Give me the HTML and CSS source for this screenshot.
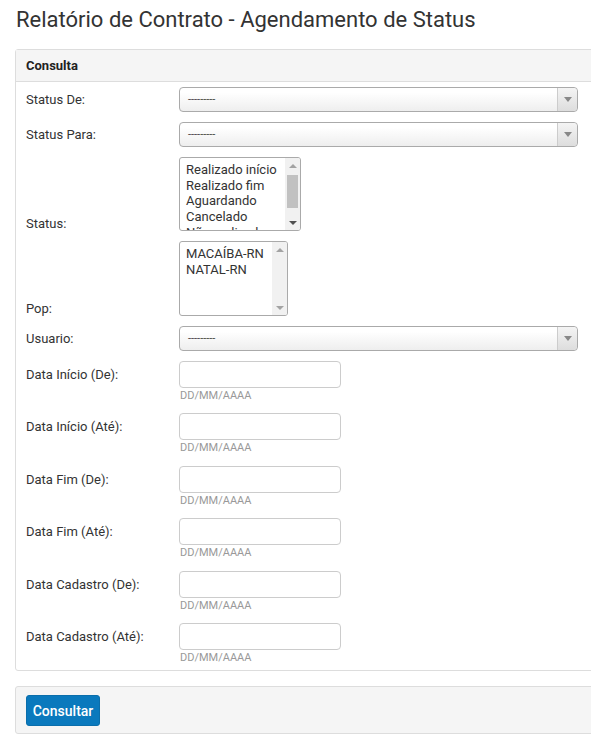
FILE: index.html
```html
<!DOCTYPE html>
<html lang="pt-BR">
<head>
<meta charset="utf-8">
<title>Relatório de Contrato - Agendamento de Status</title>
<link rel="stylesheet" href="styles.css">
</head>
<body>
<div class="page">
  <h1 class="title">Relatório de Contrato - Agendamento de Status</h1>

  <div class="panel">
    <div class="panel-heading">Consulta</div>
    <div class="panel-body">
      <div class="row row-center">
        <label class="lbl">Status De:</label>
        <div class="select"><span class="select-text">---------</span><span class="select-arrow"><i class="tri"></i></span></div>
      </div>
      <div class="row row-center">
        <label class="lbl">Status Para:</label>
        <div class="select"><span class="select-text">---------</span><span class="select-arrow"><i class="tri"></i></span></div>
      </div>
      <div class="row row-end">
        <label class="lbl">Status:</label>
        <div class="listbox lb-status">
          <div class="lb-items">
            <div>Realizado início</div>
            <div>Realizado fim</div>
            <div>Aguardando</div>
            <div>Cancelado</div>
            <div>Não realizado</div>
          </div>
          <div class="sb">
            <span class="sb-btn"><i class="sb-up light"></i></span>
            <span class="sb-track"><span class="sb-thumb"></span></span>
            <span class="sb-btn"><i class="sb-down"></i></span>
          </div>
        </div>
      </div>
      <div class="row row-end">
        <label class="lbl">Pop:</label>
        <div class="listbox lb-pop">
          <div class="lb-items">
            <div>MACAÍBA-RN</div>
            <div>NATAL-RN</div>
          </div>
          <div class="sb">
            <span class="sb-btn"><i class="sb-up light"></i></span>
            <span class="sb-track"></span>
            <span class="sb-btn"><i class="sb-down light"></i></span>
          </div>
        </div>
      </div>
      <div class="row row-center">
        <label class="lbl">Usuario:</label>
        <div class="select"><span class="select-text">---------</span><span class="select-arrow"><i class="tri"></i></span></div>
      </div>
      <div class="row row-start">
        <label class="lbl lbl-input">Data Início (De):</label>
        <div class="field"><input class="input" type="text"><span class="help">DD/MM/AAAA</span></div>
      </div>
      <div class="row row-start">
        <label class="lbl lbl-input">Data Início (Até):</label>
        <div class="field"><input class="input" type="text"><span class="help">DD/MM/AAAA</span></div>
      </div>
      <div class="row row-start">
        <label class="lbl lbl-input">Data Fim (De):</label>
        <div class="field"><input class="input" type="text"><span class="help">DD/MM/AAAA</span></div>
      </div>
      <div class="row row-start">
        <label class="lbl lbl-input">Data Fim (Até):</label>
        <div class="field"><input class="input" type="text"><span class="help">DD/MM/AAAA</span></div>
      </div>
      <div class="row row-start">
        <label class="lbl lbl-input">Data Cadastro (De):</label>
        <div class="field"><input class="input" type="text"><span class="help">DD/MM/AAAA</span></div>
      </div>
      <div class="row row-start">
        <label class="lbl lbl-input">Data Cadastro (Até):</label>
        <div class="field"><input class="input" type="text"><span class="help">DD/MM/AAAA</span></div>
      </div>
    </div>
  </div>

  <div class="panel panel-actions">
    <button class="btn" type="button">Consultar</button>
  </div>
</div>
</body>
</html>
```

FILE: styles.css
```css
html {
  overflow: hidden;
}
body {
  margin: 0;
  font-family: Roboto, "Liberation Sans", Arial, sans-serif;
  color: #333;
  background: #fff;
}
.page {
  padding-left: 15px;
  width: 590px;
}
.title {
  margin: 0;
  padding: 8px 0 0 1px;
  font-size: 22px;
  line-height: 24px;
  font-weight: 400;
  color: #333;
  height: 49px;
  box-sizing: border-box;
  white-space: nowrap;
}
.panel {
  border: 1px solid #ddd;
  border-radius: 3px;
  background: #fff;
}
.panel-heading {
  height: 31px;
  line-height: 31px;
  padding-left: 10px;
  background: #f5f5f5;
  border-bottom: 1px solid #ddd;
  font-size: 13px;
  font-weight: 700;
  color: #222;
}
.panel-body {
  padding: 5px 10px 5px;
  display: flex;
  flex-direction: column;
  gap: 10px;
}
.row {
  display: flex;
}
.row-center { align-items: center; }
.row-end { align-items: flex-end; }
.row-start { align-items: flex-start; }
.lbl {
  width: 153px;
  flex: none;
  font-size: 13px;
  line-height: 16px;
  color: #333;
}
.row-end .lbl {
  line-height: 14px;
}
.lbl-input {
  line-height: 27px;
}
.select {
  width: 399px;
  height: 25px;
  box-sizing: border-box;
  border: 1px solid #aaa;
  border-radius: 4px;
  background: linear-gradient(#fff 20%, #eee 100%);
  display: flex;
  align-items: center;
}
.select-text {
  flex: 1;
  padding-left: 8px;
  font-size: 11px;
  color: #444;
  line-height: 23px;
}
.select-arrow {
  width: 19px;
  height: 23px;
  border-left: 1px solid #ccc;
  border-radius: 0 4px 4px 0;
  background: linear-gradient(#f4f4f4, #ddd);
  display: flex;
  align-items: center;
  justify-content: center;
}
.tri {
  width: 0;
  height: 0;
  border-left: 4px solid transparent;
  border-right: 4px solid transparent;
  border-top: 5px solid #888;
}
.listbox {
  box-sizing: border-box;
  border: 1px solid #aaa;
  border-radius: 3px;
  background: #fff;
  display: flex;
  overflow: hidden;
}
.lb-status {
  width: 122px;
  height: 74px;
}
.lb-pop {
  width: 109px;
  height: 75px;
}
.lb-items {
  flex: 1;
  padding: 4px 0 0 6px;
  font-size: 13px;
  line-height: 15.7px;
  color: #333;
  white-space: nowrap;
  overflow: hidden;
}
.lb-pop .lb-items {
  line-height: 16px;
}
.sb {
  width: 15px;
  flex: none;
  background: #f1f1f1;
  display: flex;
  flex-direction: column;
}
.sb-btn {
  height: 15px;
  flex: none;
  display: flex;
  align-items: center;
  justify-content: center;
}
.sb-track {
  flex: 1;
  display: flex;
  flex-direction: column;
  padding: 2px 2px 0;
}
.sb-thumb {
  height: 33px;
  background: #c1c1c1;
}
.sb-up, .sb-down {
  width: 0;
  height: 0;
  border-left: 4px solid transparent;
  border-right: 4px solid transparent;
}
.sb-up { border-bottom: 4px solid #505050; }
.sb-down { border-top: 4px solid #505050; }
.sb-up.light { border-bottom-color: #a3a3a3; }
.sb-down.light { border-top-color: #a3a3a3; }
.field {
  display: flex;
  flex-direction: column;
}
.input {
  width: 162px;
  height: 27px;
  box-sizing: border-box;
  margin: 0;
  border: 1px solid #ccc;
  border-radius: 4px;
  background: #fff;
  padding: 0 6px;
  font: inherit;
}
.help {
  font-size: 11px;
  line-height: 15.4px;
  color: #999;
  padding-left: 1px;
}
.panel-actions {
  margin-top: 15px;
  background: #f5f5f5;
  padding: 8px 10px 7px;
}
.btn {
  display: block;
  width: 74px;
  height: 31px;
  border: 1px solid #0a6eab;
  border-radius: 3px;
  background: #0a79bd;
  color: #fff;
  font-family: inherit;
  font-size: 14px;
  font-weight: 500;
  padding: 0;
}
```
